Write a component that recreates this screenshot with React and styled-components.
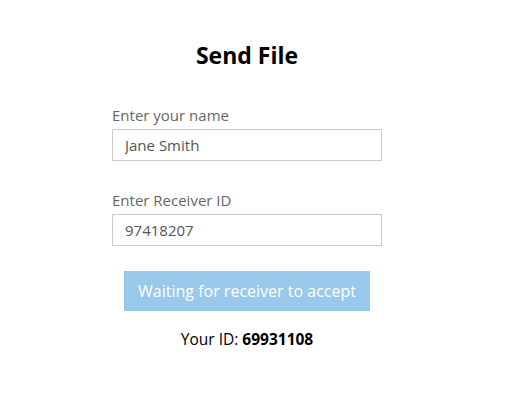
import React from "react";
import styled, { createGlobalStyle } from "styled-components";

const GlobalStyle = createGlobalStyle`
  body {
    margin: 0;
    background: #fff;
    font-family: "Open Sans", "Noto Sans", sans-serif;
  }
`;

function App() {
  return (
    <>
      <GlobalStyle />
      <Page>
        <Title>Send File</Title>
        <Form>
          <Field>
            <Label>Enter your name</Label>
            <Input defaultValue="Jane Smith" />
          </Field>
          <Field>
            <Label>Enter Receiver ID</Label>
            <Input defaultValue="97418207" />
          </Field>
          <SendButton disabled>Waiting for receiver to accept</SendButton>
          <YourId>
            Your ID: <b>69931108</b>
          </YourId>
        </Form>
      </Page>
    </>
  );
}

const Page = styled.div`
  width: 494px;
  display: flex;
  flex-direction: column;
  align-items: center;
  padding-top: 39px;
`;
const Title = styled.h2`
  margin: 0 0 34px;
  font-size: 23px;
  line-height: 32px;
  font-weight: 700;
  color: #000;
`;
const Form = styled.div`
  width: 270px;
  display: flex;
  flex-direction: column;
  align-items: center;
`;
const Field = styled.div`
  width: 100%;
  display: flex;
  flex-direction: column;

  & + & {
    margin-top: 29px;
  }
`;
const Label = styled.label`
  font-size: 15px;
  line-height: 20px;
  color: #666;
  margin-bottom: 4px;
`;
const Input = styled.input`
  box-sizing: border-box;
  width: 100%;
  height: 32px;
  padding: 0 12px;
  border: 1px solid #ccc;
  border-radius: 0;
  font-family: inherit;
  font-size: 15px;
  color: #555;
  outline: none;
`;
const SendButton = styled.button`
  width: 246px;
  height: 40px;
  margin-top: 25px;
  border: none;
  background: #99c9ea;
  color: #fff;
  font-family: inherit;
  font-size: 16px;
`;
const YourId = styled.p`
  margin: 17px 0 0;
  font-size: 15.5px;
  line-height: 22px;
  color: #000;
`;

export default App;
